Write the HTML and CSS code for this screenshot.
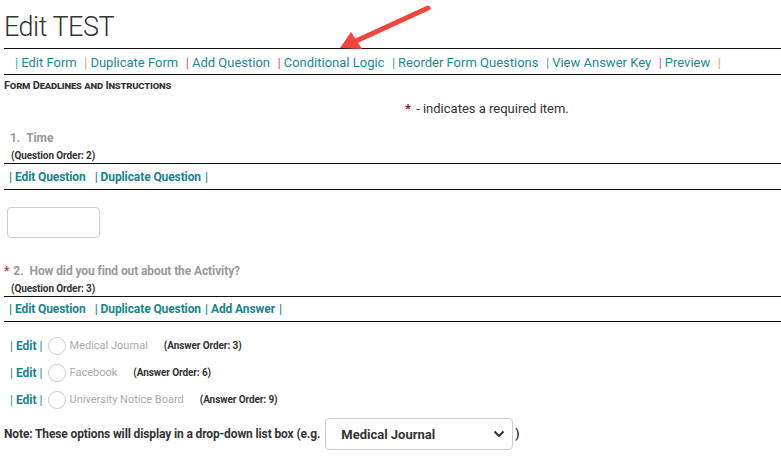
FILE: index.html
```html
<!DOCTYPE html>
<html>
<head>
<meta charset="utf-8">
<link rel="stylesheet" href="styles.css">
</head>
<body>
<div class="page">
  <h1 class="title">Edit TEST</h1>
  <nav class="nav">
    <span class="sep c1">|</span><a class="nav-link">Edit Form</a>
    <span class="sep c2">|</span><a class="nav-link">Duplicate Form</a>
    <span class="sep c3">|</span><a class="nav-link">Add Question</a>
    <span class="sep c4">|</span><a class="nav-link">Conditional Logic</a>
    <span class="sep c5">|</span><a class="nav-link">Reorder Form Questions</a>
    <span class="sep c6">|</span><a class="nav-link">View Answer Key</a>
    <span class="sep c4">|</span><a class="nav-link">Preview</a>
    <span class="sep c2">|</span>
  </nav>
  <div class="section-head">Form Deadlines and Instructions</div>
  <div class="required-note"><span class="star">*</span> - indicates a required item.</div>

  <div class="question">
    <div class="q-title"><span class="q-num">1.</span>Time</div>
    <div class="q-order">(Question Order: 2)</div>
  </div>
  <div class="q-links">
    <span class="bsep">|</span><a class="q-link">Edit Question</a>
    <span class="bsep gap">|</span><a class="q-link">Duplicate Question</a>
    <span class="bsep">|</span>
  </div>
  <div class="input-wrap"><div class="text-input"></div></div>

  <div class="question q2">
    <div class="q-title"><span class="req">*</span><span class="q-num">2.</span>How did you find out about the Activity?</div>
    <div class="q-order">(Question Order: 3)</div>
  </div>
  <div class="q-links q2-links">
    <span class="bsep">|</span><a class="q-link">Edit Question</a>
    <span class="bsep gap">|</span><a class="q-link">Duplicate Question</a>
    <span class="bsep">|</span><a class="q-link">Add Answer</a>
    <span class="bsep">|</span>
  </div>

  <div class="answers">
    <div class="answer">
      <span class="asep">|</span><a class="a-edit">Edit</a><span class="asep">|</span>
      <span class="radio"></span>
      <span class="a-label">Medical Journal</span>
      <span class="a-order">(Answer Order: 3)</span>
    </div>
    <div class="answer">
      <span class="asep">|</span><a class="a-edit">Edit</a><span class="asep">|</span>
      <span class="radio"></span>
      <span class="a-label">Facebook</span>
      <span class="a-order">(Answer Order: 6)</span>
    </div>
    <div class="answer">
      <span class="asep">|</span><a class="a-edit">Edit</a><span class="asep">|</span>
      <span class="radio"></span>
      <span class="a-label">University Notice Board</span>
      <span class="a-order">(Answer Order: 9)</span>
    </div>
  </div>

  <div class="note">
    <span>Note: These options will display in a drop-down list box (e.g.</span>
    <div class="select">
      <span>Medical Journal</span>
      <svg class="chev" width="12" height="8" viewBox="0 0 12 8"><path d="M1.5 1.5 L6 6 L10.5 1.5" fill="none" stroke="#333" stroke-width="2"/></svg>
    </div>
    <span>)</span>
  </div>

  <svg class="arrow" width="781" height="60" viewBox="0 0 781 60">
    <line x1="356" y1="41" x2="428" y2="8" stroke="#f4443e" stroke-width="5" stroke-linecap="round"/>
    <polygon points="340,48 351,32 362,49" fill="#f4443e"/>
  </svg>
</div>
</body>
</html>
```

FILE: styles.css
```css
* { box-sizing: border-box; }
html, body { margin: 0; padding: 0; background: #fff; }
body {
  font-family: Roboto, "Liberation Sans", Arial, sans-serif;
  color: #333;
}
.page {
  position: relative;
  width: 781px;
  height: 459px;
  padding-left: 4px;
  overflow: hidden;
}
.title {
  margin: 0;
  height: 49px;
  padding-top: 11px;
  font-size: 27px;
  line-height: 32px;
  font-weight: 300;
  letter-spacing: -0.5px;
  color: #333;
  border-bottom: 1px solid #111;
}
.nav {
  height: 26px;
  display: flex;
  align-items: center;
  padding-left: 11px;
  padding-top: 1px;
  font-size: 13px;
  border-bottom: 1px solid #111;
}
.sep { margin-right: 3px; }
.nav-link { color: #1a8a94; margin-right: 7.5px; }
.c1 { color: #3a9fc8; }
.c2 { color: #e2a84a; }
.c3 { color: #a2577e; }
.c4 { color: #8d67b8; }
.c5 { color: #3794b8; }
.c6 { color: #4aa6d0; }
.section-head {
  height: 21px;
  line-height: 21px;
  font-size: 11px;
  font-weight: 700;
  font-variant: small-caps;
  color: #333;
  letter-spacing: -0.2px;
}
.required-note {
  height: 24px;
  line-height: 26px;
  padding-left: 401px;
  font-size: 13px;
  color: #333;
}
.star { color: #8a1020; font-weight: 700; margin-right: 2px; }
.question { padding-top: 9px; padding-left: 6px; }
.q-title {
  height: 19px;
  line-height: 19px;
  font-size: 12px;
  font-weight: 700;
  color: #999;
  letter-spacing: -0.1px;
}
.q-num { margin-right: 6px; }
.q-order {
  height: 16px;
  line-height: 16px;
  font-size: 10px;
  font-weight: 700;
  color: #333;
  border-bottom: 1px solid #111;
  margin-left: -6px;
  padding-left: 7px;
  letter-spacing: -0.1px;
}
.q-links {
  height: 26px;
  display: flex;
  align-items: center;
  padding-left: 5px;
  font-size: 12px;
  font-weight: 700;
  border-bottom: 1px solid #111;
  letter-spacing: -0.1px;
}
.q2-links { height: 25px; }
.bsep { color: #1a8a94; margin-right: 3px; }
.bsep.gap { margin-left: 5px; }
.q-link { color: #16858d; margin-right: 4px; }
.input-wrap { padding: 17px 0 0 3px; height: 72px; }
.text-input {
  width: 93px;
  height: 31px;
  border: 1px solid #ccc;
  border-radius: 4px;
}
.q2 { padding-top: 0; padding-left: 0; }
.req { color: #c0392b; margin-right: 4px; }
.q2 .q-order { margin-left: 0; padding-left: 7px; height: 16px; }
.answers { padding-top: 10px; padding-left: 6px; }
.answer {
  height: 27px;
  display: flex;
  align-items: center;
  font-size: 12px;
}
.asep { color: #1a8a94; }
.a-edit { color: #16858d; font-weight: 700; margin: 0 3px; }
.radio {
  width: 18px;
  height: 18px;
  border: 1px solid #ccc;
  border-radius: 50%;
  margin-left: 5px;
  margin-right: 4px;
}
.a-label { color: #aaa; font-size: 11px; margin-right: 16px; }
.a-order { font-size: 10px; font-weight: 700; color: #333; letter-spacing: -0.1px; }
.note {
  margin-top: 5px;
  display: flex;
  align-items: center;
  font-size: 12px;
  font-weight: 700;
  color: #333;
  letter-spacing: -0.13px;
}
.select {
  margin-left: 5px;
  margin-right: 2px;
  width: 188px;
  height: 32px;
  border: 1px solid #ccc;
  border-radius: 4px;
  display: flex;
  align-items: center;
  justify-content: space-between;
  padding: 0 7px 0 15px;
  font-size: 13px;
  letter-spacing: 0;
}
.chev { display: block; }
.arrow { position: absolute; left: 0; top: 0; }
```
